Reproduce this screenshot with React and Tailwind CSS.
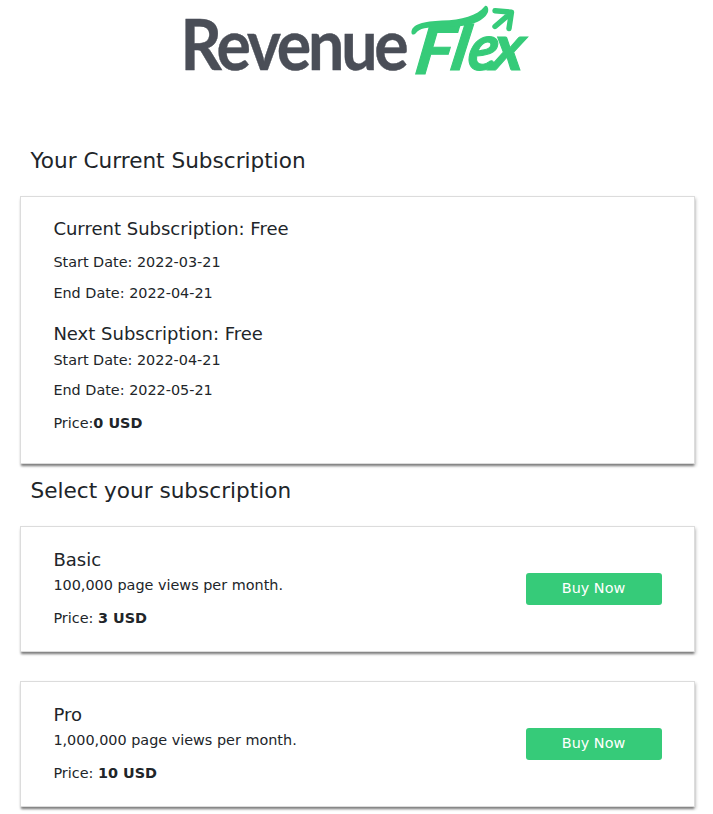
const CARD =
  'ml-5 w-[675px] border border-[#dcdcdc] bg-white pl-[32.4px] pr-8 shadow-[0_3px_2px_-1px_rgba(0,0,0,0.38),1px_2px_3px_0_rgba(0,0,0,0.22)]';

function Logo() {
  return (
    <svg className="block h-[90px] w-[713px] overflow-visible" viewBox="0 0 713 90" aria-label="RevenueFlex">
      <text
        x="180.5"
        y="69.7"
        textLength="225"
        lengthAdjust="spacingAndGlyphs"
        fill="#4a4e57"
        stroke="#4a4e57"
        strokeWidth="0.4"
        className="font-['Lato',sans-serif] text-[70px] font-bold tracking-[-3.5px]"
      >
        Revenue
      </text>
      <g fill="#36cb79" stroke="#36cb79" strokeWidth="1" className="font-['Lato',sans-serif] text-[62px] font-bold italic">
        <text transform="translate(413 74) skewX(-9) scale(1.15 1.08)">F</text>
        <text transform="translate(449 69.5) skewX(-10) scale(1.15 1)">l</text>
        <text transform="translate(466 69.5) skewX(-8) scale(1 1.04)">e</text>
        <text transform="translate(490 69.5) skewX(-8) scale(1.07 1.04)">x</text>
      </g>
      <path
        d="M411.5 33 C411 24 424 21.5 442 20.5 C462 20 477 16 485 6 C487 4.5 489 8 488 12 C483 24 463 27.5 442 27 C427 27 419 28.5 416 33 C414 35 412 35 411.5 33 Z"
        fill="#36cb79"
      />
      <path
        d="M495 10.7 L511.5 12.2 L509 28.5 M509.5 14 L495 26.5"
        fill="none"
        stroke="#36cb79"
        strokeWidth="5.4"
        strokeLinecap="round"
        strokeLinejoin="round"
      />
    </svg>
  );
}

function Title({ children }) {
  return <h2 className="pl-[30.5px] text-[21.6px] leading-[25px]">{children}</h2>;
}

function Plan({ name, views, price }) {
  return (
    <section className={CARD + ' flex h-[126px] justify-between'}>
      <div className="pt-[21px]">
        <h3 className="text-[18px] leading-[23px]">{name}</h3>
        <p className="mt-[3px]">{views} page views per month.</p>
        <p className="mt-[11px]">
          Price: <b>{price} USD</b>
        </p>
      </div>
      <button className="mt-[46px] h-8 w-[136px] rounded-[3px] bg-[#36cb79] pb-1.5 pr-px pt-1 text-white">
        Buy Now
      </button>
    </section>
  );
}

export default function App() {
  return (
    <main className="h-[814px] w-[713px] overflow-hidden bg-white font-['DejaVu_Sans',sans-serif] text-[14.4px] leading-[22px] text-[#212529]">
      <Logo />
      <div className="pt-[58px]">
        <Title>Your Current Subscription</Title>
      </div>
      <section className={CARD + ' mt-[23px] h-[268px] pt-5'}>
        <h3 className="text-[18px] leading-[23px]">Current Subscription: Free</h3>
        <p className="mt-[11px]">Start Date: 2022-03-21</p>
        <p className="mt-[9px]">End Date: 2022-04-21</p>
        <h3 className="mt-[18px] text-[18px] leading-[23px]">Next Subscription: Free</h3>
        <p className="mt-1">Start Date: 2022-04-21</p>
        <p className="mt-2">End Date: 2022-05-21</p>
        <p className="mt-[11px]">
          Price:<b>0 USD</b>
        </p>
      </section>
      <div className="mb-[23px] mt-[14px]">
        <Title>Select your subscription</Title>
      </div>
      <div className="flex flex-col gap-[29px]">
        <Plan name="Basic" views="100,000" price="3" />
        <Plan name="Pro" views="1,000,000" price="10" />
      </div>
    </main>
  );
}
